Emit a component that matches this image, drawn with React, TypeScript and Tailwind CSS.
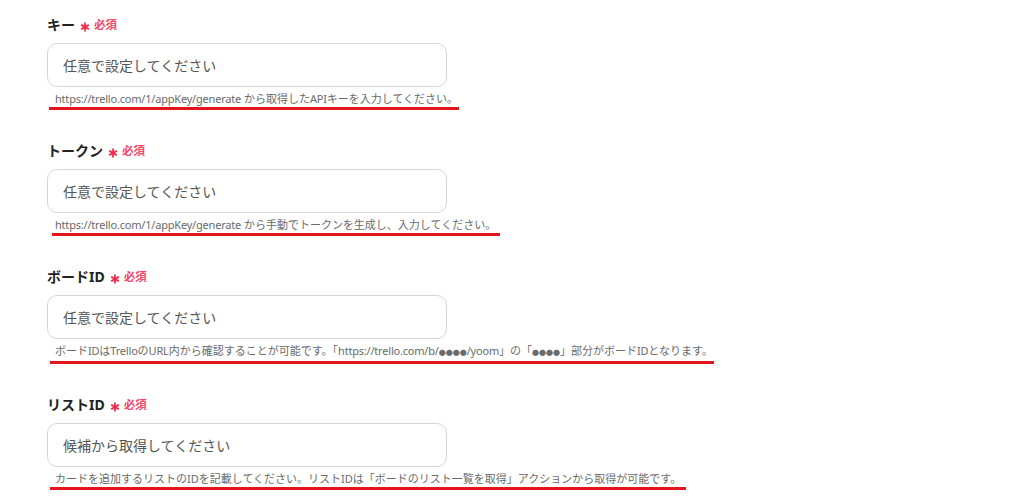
import React from "react";

const font = { fontFamily: '"Noto Sans", "Noto Sans CJK JP", sans-serif' };

function Asterisk() {
  return (
    <svg width="10" height="10" viewBox="0 0 10 10" className="ml-[5px] mt-[4px]">
      <g stroke="#ee2e4e" strokeWidth="1.8" strokeLinecap="round">
        <line x1="5" y1="1.2" x2="5" y2="8.8" />
        <line x1="1.7" y1="3.1" x2="8.3" y2="6.9" />
        <line x1="1.7" y1="6.9" x2="8.3" y2="3.1" />
      </g>
    </svg>
  );
}

function L({ children }: { children: React.ReactNode }) {
  return <span className="tracking-[-0.2px]">{children}</span>;
}

function Dots() {
  return <span className="text-[7px] tracking-[0px]">●●●●</span>;
}

type Field = {
  label: string;
  placeholder: string;
  help: React.ReactNode;
  ulLeft: string;
  ulPad: string;
};

const fields: Field[] = [
  {
    label: "キー",
    placeholder: "任意で設定してください",
    help: (
      <>
        <L>https://trello.com/1/appKey/generate</L> から取得した<L>API</L>キーを入力してください。
      </>
    ),
    ulLeft: "ml-[2px]",
    ulPad: "pl-[6px] pr-[1px]",
  },
  {
    label: "トークン",
    placeholder: "任意で設定してください",
    help: (
      <>
        <L>https://trello.com/1/appKey/generate</L> から手動でトークンを生成し、入力してください。
      </>
    ),
    ulLeft: "ml-[5px]",
    ulPad: "pl-[3px] pr-[4px]",
  },
  {
    label: "ボードID",
    placeholder: "任意で設定してください",
    help: (
      <>
        ボード<L>ID</L>は<L>Trello</L>の<L>URL</L>内から確認することが可能です。「<L>https://trello.com/b/</L>
        <Dots />
        <L>/yoom</L>」の「<Dots />」部分がボード<L>ID</L>となります。
      </>
    ),
    ulLeft: "ml-[3px]",
    ulPad: "pl-[5px] pr-[1px]",
  },
  {
    label: "リストID",
    placeholder: "候補から取得してください",
    help: "カードを追加するリストのIDを記載してください。リストIDは「ボードのリスト一覧を取得」アクションから取得が可能です。",
    ulLeft: "ml-[3px]",
    ulPad: "pl-[5px] pr-[5px]",
  },
];

export default function App() {
  return (
    <div className="w-[1019px] h-[502px] bg-white overflow-hidden pt-[15px] pl-[47px]" style={font}>
      <div className="flex flex-col gap-[31px]">
        {fields.map((f, i) => (
          <div key={i} className="flex flex-col items-start">
            <div className="flex items-center h-5">
              <span className="text-[14px] font-bold text-[#222] leading-5">{f.label}</span>
              <Asterisk />
              <span className="ml-[4px] text-[11.5px] font-bold text-[#f0476a] leading-5">必須</span>
            </div>
            <div className="mt-2 h-[44px] w-[400px] rounded-[10px] border border-[#d3d6dd] flex items-center pl-[15px]">
              <span className="text-[14px] text-[#555]">{f.placeholder}</span>
            </div>
            <div
              className={`mt-[4px] ${f.ulLeft} ${f.ulPad} text-[11px] leading-[16px] text-[#6a6a6a] border-b-[3px] border-[#e2161c] whitespace-nowrap`}
            >
              {f.help}
            </div>
          </div>
        ))}
      </div>
    </div>
  );
}
